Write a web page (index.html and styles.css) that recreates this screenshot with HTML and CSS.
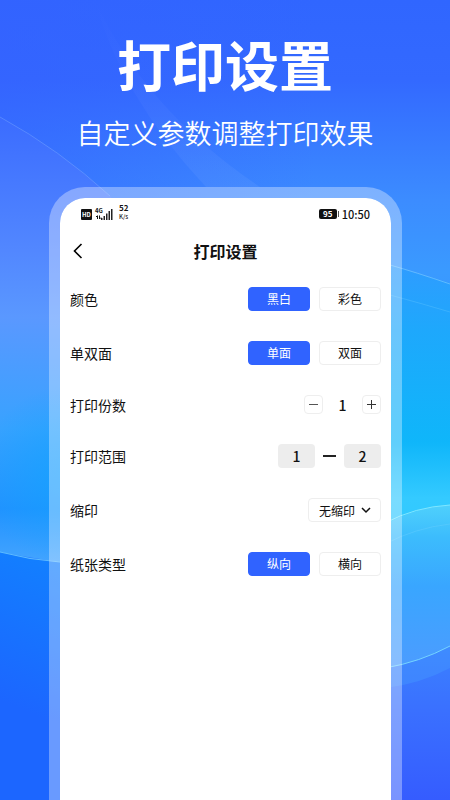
FILE: index.html
```
<!DOCTYPE html>
<html lang="zh-CN">
<head>
<meta charset="utf-8">
<meta name="viewport" content="width=device-width, initial-scale=1">
<title>打印设置</title>
<link rel="stylesheet" href="styles.css">
</head>
<body>
<svg class="bg" viewBox="0 0 450 800" preserveAspectRatio="none" aria-hidden="true">
  <defs>
    <linearGradient id="base" x1="0" y1="0" x2="0" y2="1">
      <stop offset="0" stop-color="#3066ff"/>
      <stop offset=".1" stop-color="#3369ff"/>
      <stop offset=".25" stop-color="#3c8cff"/>
      <stop offset=".34" stop-color="#3a9aff"/>
      <stop offset="1" stop-color="#1a66ff"/>
    </linearGradient>
    <linearGradient id="shade" x1="0" y1="0" x2="1" y2="0">
      <stop offset="0" stop-color="#3560ff" stop-opacity=".5"/>
      <stop offset=".7" stop-color="#3560ff" stop-opacity="0"/>
    </linearGradient>
    <linearGradient id="left" gradientUnits="userSpaceOnUse" x1="0" y1="117" x2="0" y2="562">
      <stop offset="0" stop-color="#3b6cff"/>
      <stop offset=".3" stop-color="#5287ff"/>
      <stop offset=".45" stop-color="#5a98ff"/>
      <stop offset=".7" stop-color="#38a2ff"/>
      <stop offset=".88" stop-color="#2192ff"/>
      <stop offset="1" stop-color="#43a4ff"/>
    </linearGradient>
    <radialGradient id="leftglow" gradientUnits="userSpaceOnUse" cx="70" cy="475" r="90">
      <stop offset="0" stop-color="#10a4ff" stop-opacity=".7"/>
      <stop offset="1" stop-color="#10a4ff" stop-opacity="0"/>
    </radialGradient>
    <linearGradient id="low" gradientUnits="userSpaceOnUse" x1="0" y1="700" x2="60" y2="560">
      <stop offset="0" stop-color="#1c66ff"/>
      <stop offset="1" stop-color="#1280ff"/>
    </linearGradient>
    <linearGradient id="right" gradientUnits="userSpaceOnUse" x1="0" y1="260" x2="0" y2="540">
      <stop offset="0" stop-color="#309bff"/>
      <stop offset=".25" stop-color="#1ea8fc"/>
      <stop offset=".65" stop-color="#0fb6fa"/>
      <stop offset=".85" stop-color="#34caff"/>
      <stop offset="1" stop-color="#30c8ff"/>
    </linearGradient>
    <linearGradient id="wave" gradientUnits="userSpaceOnUse" x1="0" y1="505" x2="0" y2="668">
      <stop offset="0" stop-color="#4fd0fc"/>
      <stop offset=".2" stop-color="#3cbcfd"/>
      <stop offset=".5" stop-color="#39a6ff"/>
      <stop offset="1" stop-color="#4c9cff"/>
    </linearGradient>
    <linearGradient id="corner" gradientUnits="userSpaceOnUse" x1="0" y1="650" x2="0" y2="800">
      <stop offset="0" stop-color="#3b80ff"/>
      <stop offset=".4" stop-color="#3a70ff"/>
      <stop offset="1" stop-color="#355cff"/>
    </linearGradient>
    <linearGradient id="beam" x1="0" y1="0" x2="0" y2="1">
      <stop offset="0" stop-color="#fff" stop-opacity="0"/>
      <stop offset="1" stop-color="#fff" stop-opacity=".05"/>
    </linearGradient>
  </defs>
  <path fill="url(#base)" d="M0 0H450V800H0z"/>
  <path fill="url(#shade)" d="M0 0H450V240H0z"/>
  <path fill="url(#beam)" d="M95 0Q120 95 206 187H260Q145 110 95 0z"/>
  <path fill="url(#left)" d="M0 117Q60 150 110 196L225 340V575Q90 570 0 552z"/>
  <path fill="url(#leftglow)" d="M0 370H60V562Q30 560 0 552z"/>
  <path fill="none" stroke="#7fb0ff" stroke-opacity=".4" d="M0 117Q60 150 110 196"/>
  <path fill="url(#low)" d="M0 552Q30 560 60 562H225V800H0z"/>
  <path fill="none" stroke="#5cbcff" d="M0 552Q30 560 60 562"/>
  <path fill="url(#right)" d="M225 230Q350 245 390 265Q415 273 450 283V560H225z"/>
  <path fill="none" stroke="#6cc0ff" stroke-opacity=".8" d="M390 265Q415 272 450 284"/>
  <path fill="none" stroke="#5cc4ff" stroke-opacity=".4" d="M390 295Q420 303 450 312"/>
  <path fill="url(#corner)" d="M225 640H450V800H225z"/>
  <path fill="#459cff" fill-opacity=".4" d="M385 640H450V668Q420 684 385 688z"/>
  <path fill="url(#wave)" d="M225 600Q345 525 390 522Q418 507 450 505V646Q420 662 385 668L225 690z"/>
  <path fill="none" stroke="#6fd0ff" stroke-opacity=".35" d="M385 544Q415 528 450 524"/>
  <path fill="none" stroke="#7fe6ff" d="M385 523Q415 507 450 505"/>
  <path fill="none" stroke="#74d4ff" d="M385 668Q420 662 450 646"/>
</svg>

<header class="hero">
  <h1>打印设置</h1>
  <p>自定义参数调整打印效果</p>
</header>

<main class="phone">
  <div class="status">
    <span class="hd">HD</span>
    <div class="signal">
      <span class="net">4G</span>
      <svg width="18" height="12" viewBox="0 0 18 12" aria-hidden="true">
        <path d="M2.500 11V8M1 9l1.500-1.500M4.500 7.500v3.500M6 9.500L4.500 11" stroke="#111" stroke-width="1" fill="none"/>
        <path d="M6 10h1.500v2H6zM8.500 8H10v4H8.500zM11 5.500h1.500V12H11zM13.500 3H15v9h-1.500zM16 1h1.500v11H16z" fill="#222"/>
      </svg>
    </div>
    <div class="speed"><b>52</b><span>K/s</span></div>
    <span class="battery">95</span>
    <span class="time">10:50</span>
  </div>

  <div class="navbar">
    <button class="back" type="button" aria-label="返回">
      <svg width="10" height="16" viewBox="0 0 10 16"><path d="M8.500 1L1.500 8l7 7" fill="none" stroke="#000" stroke-width="1.600"/></svg>
    </button>
    <h2>打印设置</h2>
  </div>

  <form class="settings">
    <div class="row" role="radiogroup" aria-labelledby="l-color">
      <span id="l-color">颜色</span>
      <div class="options">
        <label class="option"><input type="radio" name="color" checked><span>黑白</span></label>
        <label class="option"><input type="radio" name="color"><span>彩色</span></label>
      </div>
    </div>
    <div class="row" role="radiogroup" aria-labelledby="l-side">
      <span id="l-side">单双面</span>
      <div class="options">
        <label class="option"><input type="radio" name="side" checked><span>单面</span></label>
        <label class="option"><input type="radio" name="side"><span>双面</span></label>
      </div>
    </div>
    <div class="row">
      <label for="copies">打印份数</label>
      <div class="stepper">
        <button type="button" aria-label="减少">
          <svg width="11" height="11" viewBox="0 0 11 11"><path d="M1 5.500h9" stroke="#555"/></svg>
        </button>
        <input id="copies" type="text" inputmode="numeric" value="1">
        <button type="button" aria-label="增加">
          <svg width="11" height="11" viewBox="0 0 11 11"><path d="M1 5.500h9M5.500 1v9" stroke="#333"/></svg>
        </button>
      </div>
    </div>
    <div class="row">
      <label for="from">打印范围</label>
      <div class="range">
        <input id="from" type="text" inputmode="numeric" value="1">
        <i class="dash"></i>
        <input type="text" inputmode="numeric" value="2" aria-label="结束页">
      </div>
    </div>
    <div class="row">
      <label for="shrink">缩印</label>
      <div class="picker">
        <select id="shrink">
          <option>无缩印</option>
        </select>
        <svg width="10" height="7" viewBox="0 0 10 7" aria-hidden="true"><path d="M1 1l4 4 4-4" fill="none" stroke="#111" stroke-width="1.500"/></svg>
      </div>
    </div>
    <div class="row" role="radiogroup" aria-labelledby="l-paper">
      <span id="l-paper">纸张类型</span>
      <div class="options">
        <label class="option"><input type="radio" name="paper" checked><span>纵向</span></label>
        <label class="option"><input type="radio" name="paper"><span>横向</span></label>
      </div>
    </div>
  </form>
</main>
</body>
</html>
```

FILE: styles.css
```
* {box-sizing: border-box;}

body {
  margin: 0;
  min-height: 100vh;
  display: flex;
  flex-direction: column;
  background: #2f80ff;
  color: #111;
  font-family: "Noto Sans CJK SC", sans-serif;
}

h1, h2, p {margin: 0;}

button, input, select {
  font-family: inherit;
  color: inherit;
  padding: 0;
  margin: 0;
}

.bg {
  position: absolute;
  top: 0;
  left: 0;
  width: 100%;
  height: 100%;
  z-index: -1;
}

/* heading */
.hero {
  padding: 34px 0 36px;
  color: #fff;
  text-align: center;
}

.hero h1 {
  font-size: 54px;
  line-height: 60px;
  font-weight: 700;
}

.hero p {
  margin-top: 21px;
  font-size: 27px;
  line-height: 36px;
  font-weight: 350;
}

/* phone */
.phone {
  flex: 1;
  margin: 0 48px 0 49px;
  border: 11px solid rgba(255,255,255,.34);
  border-bottom: 0;
  border-radius: 36px 36px 0 0;
  background: #fff;
  background-clip: padding-box;
}

.status {
  display: flex;
  align-items: center;
  height: 32px;
  padding: 0 21px;
}

.hd {
  width: 11px;
  height: 11px;
  border-radius: 1px;
  background: #111;
  color: #fff;
  font-size: 6px;
  line-height: 11px;
  font-weight: 700;
  text-align: center;
}

.signal {
  position: relative;
  display: flex;
  margin-left: 3px;
}

.net {
  position: absolute;
  top: -1px;
  left: 0;
  font-size: 6px;
  line-height: 7px;
  font-weight: 700;
}

.speed {
  display: flex;
  flex-direction: column;
  margin-left: 6px;
  margin-bottom: 4px;
  font-size: 6px;
  line-height: 8px;
  font-weight: 500;
}

.speed b {
  font-size: 8px;
  line-height: 10px;
}

.battery {
  position: relative;
  width: 18px;
  height: 10px;
  margin-left: auto;
  margin-right: 5px;
  border-radius: 2px;
  background: #111;
  color: #fff;
  font-size: 8px;
  line-height: 10px;
  font-weight: 700;
  text-align: center;
}

.battery::after {
  content: "";
  position: absolute;
  top: 2px;
  right: -2px;
  width: 1px;
  height: 6px;
  background: #555;
}

.time {
  font-size: 11px;
  line-height: 16px;
  font-weight: 500;
}

.navbar {
  display: flex;
  align-items: center;
  height: 42px;
  padding: 0 13px;
}

.back {
  display: flex;
  width: 10px;
  border: 0;
  background: none;
}

.navbar h2 {
  flex: 1;
  margin-right: 10px;
  font-size: 16px;
  line-height: 24px;
  font-weight: 700;
  text-align: center;
}

/* settings */
.settings {padding: 0 10px;}

.row {
  display: flex;
  align-items: center;
  justify-content: space-between;
  padding: 15px 0;
  font-size: 14px;
  line-height: 16px;
}

.options {
  display: flex;
  gap: 9px;
}

.option {
  position: relative;
  display: flex;
}

.option input {
  position: absolute;
  opacity: 0;
}

.option span {
  width: 62px;
  height: 24px;
  border: 1px solid #eee;
  border-radius: 4px;
  font-size: 12px;
  line-height: 22px;
  text-align: center;
}

.option input:checked + span {
  background: #3063ff;
  border-color: #3063ff;
  color: #fff;
}

.stepper, .range {
  display: flex;
  align-items: center;
}

.stepper button {
  display: flex;
  align-items: center;
  justify-content: center;
  width: 19px;
  height: 19px;
  border: 1px solid #eee;
  border-radius: 4px;
  background: #fff;
}

.stepper input {
  width: 39px;
  height: 19px;
  border: 0;
  background: none;
  font-size: 14px;
  font-weight: 500;
  text-align: center;
}

.range {gap: 8px;}

.range input {
  width: 37px;
  height: 24px;
  border: 0;
  border-radius: 4px;
  background: #ededed;
  font-size: 14px;
  font-weight: 500;
  text-align: center;
}

.dash {
  width: 13px;
  height: 2px;
  background: #222;
}

.picker {
  position: relative;
  display: flex;
}

.picker select {
  appearance: none;
  width: 73px;
  height: 24px;
  padding-left: 10px;
  border: 1px solid #eee;
  border-radius: 4px;
  background: #fff;
  font-size: 12px;
}

.picker svg {
  position: absolute;
  top: 9px;
  right: 10px;
  pointer-events: none;
}
```
